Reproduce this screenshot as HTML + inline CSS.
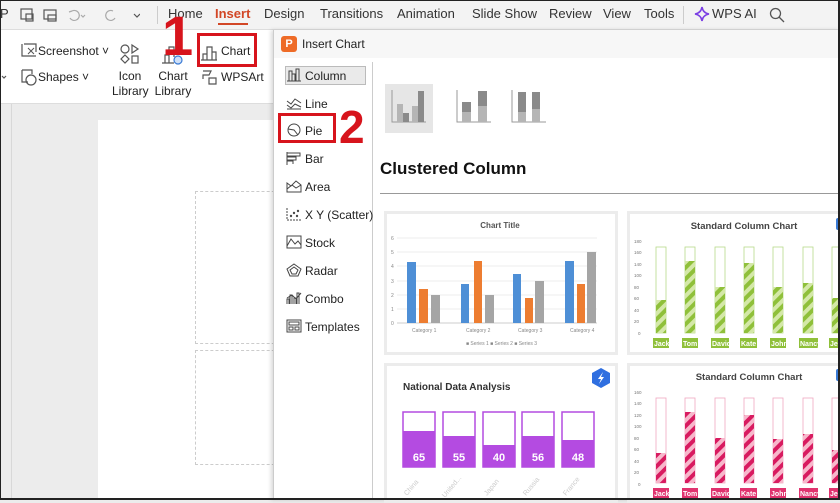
<!DOCTYPE html>
<html><head><meta charset="utf-8"><style>
*{margin:0;padding:0;box-sizing:border-box}
body{width:840px;height:500px;overflow:hidden;background:#ececec;font-family:"Liberation Sans",sans-serif;position:relative;color:#222}
.a{position:absolute;white-space:nowrap}
.tab{position:absolute;top:6px;font-size:13px;color:#333;white-space:nowrap}
.mi{position:absolute;left:286px;font-size:12px;color:#222;white-space:nowrap}
.mi svg{position:absolute;left:0;top:-1px}
.mi span{position:absolute;left:19px;top:0;white-space:nowrap}
.card{position:absolute;background:#fff;border:3px solid #ececec}
</style></head><body>
<div class="a" style="left:0;top:0;width:840px;height:30px;background:#f3f3f3;border-bottom:1px solid #ddd"></div>
<div class="tab" style="left:0">P</div>
<svg class="a" style="left:20px;top:6px" width="120" height="18" fill="none" stroke="#555" stroke-width="1.2">
<rect x="1" y="3" width="11" height="10"/><rect x="6" y="8" width="7" height="7"/>
<rect x="24" y="4" width="12" height="9"/><rect x="28" y="9" width="8" height="6"/>
<path d="M52 5a5 5 0 1 1-2 7M52 5l-3 1" stroke="#aaa"/><path d="M61 9l2 2 2-2" stroke="#aaa"/>
<path d="M93 5a5 5 0 1 0 2 7" stroke="#aaa"/>
<path d="M114 8l3 3 3-3"/></svg>
<div class="a" style="left:157px;top:6px;width:1px;height:18px;background:#ccc"></div>
<div class="tab" style="left:168px">Home</div>
<div class="tab" style="left:215px;color:#d24726;font-weight:bold">Insert</div>
<div class="a" style="left:218px;top:23px;width:30px;height:2px;background:#d24726"></div>
<div class="tab" style="left:264px">Design</div>
<div class="tab" style="left:320px">Transitions</div>
<div class="tab" style="left:397px">Animation</div>
<div class="tab" style="left:472px">Slide Show</div>
<div class="tab" style="left:549px">Review</div>
<div class="tab" style="left:603px">View</div>
<div class="tab" style="left:644px">Tools</div>
<div class="a" style="left:683px;top:6px;width:1px;height:18px;background:#ccc"></div>
<svg class="a" style="left:694px;top:6px" width="16" height="16"><path d="M8 1Q9 7 15 8Q9 9 8 15Q7 9 1 8Q7 7 8 1Z" fill="none" stroke="#7b3fe4" stroke-width="1.6"/></svg>
<div class="tab" style="left:712px">WPS AI</div>
<svg class="a" style="left:769px;top:7px" width="16" height="16" fill="none" stroke="#555" stroke-width="1.3"><circle cx="6.5" cy="6.5" r="5"/><path d="M10 10l5 5"/></svg>
<div class="a" style="left:0;top:30px;width:840px;height:74px;background:#fff;border-bottom:1px solid #ddd"></div>
<svg class="a" style="left:0;top:40px" width="280" height="60" fill="none" stroke="#555" stroke-width="1.2">
<path d="M2 36l2 2 2-2"/>
<path d="M22 4v12h14M24 4h12v8" /><path d="M28 8l6 6M34 8l-6 6" stroke-width="1"/>
<path d="M22 30v12h6M22 30h10v4"/><circle cx="31" cy="40" r="5"/>
<circle cx="125" cy="9" r="4"/><path d="M132 5l6 4-6 4z"/><path d="M125 15l4 4-4 4-4-4z"/><rect x="132" y="16" width="6" height="7"/>
<path d="M165 23v-8h4v8h-4M169 23V7h5v10M162 23h12"/><circle cx="178" cy="20" r="4" stroke="#3a7bd5" fill="#cfe0f7"/>
<path d="M203 20v-6h4v6M207 20V7h5v13M212 20v-8h4v8M201 20h16"/>
<path d="M203 31h8l-2 4h-6v4M209 38h7v6h-7z"/></svg>
<div class="a" style="left:38px;top:44px;font-size:12px">Screenshot ˅</div>
<div class="a" style="left:38px;top:70px;font-size:12px">Shapes ˅</div>
<div class="a" style="left:112px;top:69px;font-size:12px;text-align:center;width:36px;line-height:15px">Icon<br>Library</div>
<div class="a" style="left:152px;top:69px;font-size:12px;text-align:center;width:42px;line-height:15px">Chart<br>Library</div>
<div class="a" style="left:221px;top:44px;font-size:12px">Chart</div>
<div class="a" style="left:221px;top:70px;font-size:12px">WPSArt</div>
<div class="a" style="left:197px;top:33px;width:60px;height:34px;border:3px solid #d7141c"></div>
<div class="a" style="left:162px;top:8px;font-size:56px;font-weight:bold;color:#d7141c;line-height:56px">1</div>
<div class="a" style="left:11px;top:104px;width:1px;height:396px;background:#d8d8d8"></div>
<div class="a" style="left:98px;top:120px;width:180px;height:380px;background:#fff"></div>
<div class="a" style="left:195px;top:191px;width:90px;height:153px;border:1px dashed #ccc"></div>
<div class="a" style="left:195px;top:350px;width:90px;height:115px;border:1px dashed #ccc"></div>
<div class="a" style="left:273px;top:30px;width:567px;height:470px;background:#fff;border-left:1px solid #ccc;box-shadow:-2px 0 4px rgba(0,0,0,.15)"></div>
<div class="a" style="left:274px;top:30px;width:566px;height:28px;background:#f7f7f7"></div>
<div class="a" style="left:281px;top:36px;width:16px;height:16px;background:#ee6b27;border-radius:3px;color:#fff;font-size:11px;font-weight:bold;text-align:center;line-height:16px">P</div>
<div class="a" style="left:302px;top:37px;font-size:12px">Insert Chart</div>
<div class="a" style="left:372px;top:62px;width:1px;height:438px;background:#ccc"></div>
<div class="a" style="left:285px;top:66px;width:81px;height:19px;background:#eaeaea;border:1px solid #bbb"></div>
<div class="mi" style="top:69px"><svg width="16" height="14" fill="none" stroke="#444"><path d="M1 13h14M3 13V3h3v10M6 13V6h3v7M10 13V1h3v12"/></svg><span>Column</span></div>
<div class="mi" style="top:97px"><svg width="16" height="14" fill="none" stroke="#444"><path d="M1 5l4 3 4-5 6 4M1 9l4 3 4-4 6 3M1 13h14"/></svg><span>Line</span></div>
<div class="mi" style="top:124px"><svg width="16" height="14" fill="none" stroke="#444"><circle cx="8" cy="7" r="6"/><path d="M2 6l6 1 4 5"/></svg><span>Pie</span></div>
<div class="mi" style="top:152px"><svg width="16" height="14" fill="none" stroke="#444"><path d="M1 1v13M1 2h13v3H1M1 6h9v3H1M1 10h6v3"/></svg><span>Bar</span></div>
<div class="mi" style="top:180px"><svg width="16" height="14" fill="none" stroke="#444"><path d="M1 13V4l4 3 5-5 5 4v7zM1 10l5-4 4 3 5-3"/></svg><span>Area</span></div>
<div class="mi" style="top:208px"><svg width="16" height="14" fill="none" stroke="#444"><path d="M1 1v12h14" stroke-dasharray="2 1"/><circle cx="5" cy="9" r=".7"/><circle cx="8" cy="6" r=".7"/><circle cx="12" cy="4" r=".7"/><circle cx="11" cy="9" r=".7"/></svg><span>X Y (Scatter)</span></div>
<div class="mi" style="top:236px"><svg width="16" height="14" fill="none" stroke="#444"><rect x="1" y="1" width="14" height="12"/><path d="M1 11l4-7 4 5 3-3 3 4"/></svg><span>Stock</span></div>
<div class="mi" style="top:264px"><svg width="16" height="14" fill="none" stroke="#444"><path d="M8 1l7 5-3 7H4L1 6z"/><path d="M8 4l4 3-2 4H6L4 7z"/></svg><span>Radar</span></div>
<div class="mi" style="top:292px"><svg width="16" height="14" fill="none" stroke="#444"><path d="M1 13V8h2v5M4 13V4h2v9M8 13V7h2v6M11 13V2h2v11M1 7l5-3 4 4 5-6"/></svg><span>Combo</span></div>
<div class="mi" style="top:320px"><svg width="16" height="14" fill="none" stroke="#444"><rect x="1" y="1" width="14" height="12"/><rect x="3" y="3" width="10" height="3"/><rect x="3" y="8" width="4" height="3"/><rect x="9" y="8" width="4" height="3"/></svg><span>Templates</span></div>
<div class="a" style="left:278px;top:113px;width:58px;height:30px;border:3px solid #d7141c"></div>
<div class="a" style="left:339px;top:104px;font-size:46px;font-weight:bold;color:#d7141c;line-height:46px">2</div>
<svg class="a" style="left:385px;top:84px" width="170" height="50">
<rect x="0" y="0" width="48" height="49" fill="#e6e6e6"/>
<path d="M7 6v32h34M72 6v32h34M127 6v32h34" stroke="#999" fill="none"/>
<rect x="12" y="20" width="6" height="18" fill="#b5b5b5"/><rect x="18" y="29" width="6" height="9" fill="#8a8a8a"/><rect x="27" y="22" width="6" height="16" fill="#b5b5b5"/><rect x="33" y="7" width="6" height="31" fill="#8a8a8a"/>
<rect x="77" y="28" width="9" height="10" fill="#b5b5b5"/><rect x="77" y="18" width="9" height="10" fill="#8a8a8a"/><rect x="93" y="22" width="9" height="16" fill="#b5b5b5"/><rect x="93" y="7" width="9" height="15" fill="#8a8a8a"/>
<rect x="133" y="28" width="8" height="10" fill="#b5b5b5"/><rect x="133" y="8" width="8" height="20" fill="#8a8a8a"/><rect x="147" y="25" width="8" height="13" fill="#b5b5b5"/><rect x="147" y="8" width="8" height="17" fill="#8a8a8a"/></svg>
<div class="a" style="left:380px;top:159px;font-size:17px;font-weight:bold;color:#111">Clustered Column</div>
<div class="a" style="left:380px;top:193px;width:460px;height:1px;background:#999"></div>
<div class="card" style="left:384px;top:211px;width:234px;height:144px"></div>
<div class="card" style="left:627px;top:211px;width:216px;height:144px"></div>
<div class="card" style="left:384px;top:363px;width:234px;height:140px"></div>
<div class="card" style="left:627px;top:363px;width:216px;height:140px"></div>
<svg class="a" style="left:0;top:0" width="840" height="500" font-family="Liberation Sans, sans-serif">
<defs>
<pattern id="g" width="8" height="8" patternUnits="userSpaceOnUse" patternTransform="rotate(45)"><rect width="8" height="8" fill="#d4e8a8"/><rect width="4" height="8" fill="#8fc03a"/></pattern>
<pattern id="p" width="8" height="8" patternUnits="userSpaceOnUse" patternTransform="rotate(45)"><rect width="8" height="8" fill="#f7b7cb"/><rect width="4" height="8" fill="#d81b60"/></pattern>
</defs>
<text x="500" y="228" font-size="8" font-weight="bold" fill="#555" text-anchor="middle">Chart Title</text>
<g stroke="#eee"><path d="M397 238h200M397 252h200M397 266h200M397 281h200M397 295h200M397 309h200"/></g>
<path d="M397 323h200" stroke="#ccc"/>
<g font-size="5" fill="#888"><text x="391" y="240">6</text><text x="391" y="254">5</text><text x="391" y="268">4</text><text x="391" y="283">3</text><text x="391" y="297">2</text><text x="391" y="311">1</text><text x="391" y="325">0</text>
<text x="412" y="332">Category 1</text><text x="466" y="332">Category 2</text><text x="518" y="332">Category 3</text><text x="570" y="332">Category 4</text>
<text x="466" y="345">■ Series 1 ■ Series 2 ■ Series 3</text></g>
<g fill="#4e8fd6"><rect x="407" y="262" width="9" height="61"/><rect x="461" y="284" width="8" height="39"/><rect x="513" y="274" width="8" height="49"/><rect x="565" y="261" width="9" height="62"/></g>
<g fill="#ed7d31"><rect x="419" y="289" width="9" height="34"/><rect x="474" y="261" width="8" height="62"/><rect x="525" y="298" width="8" height="25"/><rect x="577" y="284" width="8" height="39"/></g>
<g fill="#a5a5a5"><rect x="431" y="295" width="9" height="28"/><rect x="485" y="295" width="9" height="28"/><rect x="535" y="281" width="9" height="42"/><rect x="587" y="252" width="9" height="71"/></g>
<text x="744" y="229" font-size="9.5" font-weight="bold" fill="#444" text-anchor="middle">Standard Column Chart</text>
<rect x="836" y="218" width="6" height="12" fill="#3a7bd5" rx="2"/>
<g font-size="4.5" fill="#777"><text x="634" y="243">180</text><text x="634" y="254">160</text><text x="634" y="266">140</text><text x="634" y="277">100</text><text x="634" y="289">80</text><text x="634" y="300">60</text><text x="634" y="312">40</text><text x="634" y="323">20</text><text x="638" y="335">0</text></g>
<g fill="#fff" stroke="#b8d98a" stroke-width=".8">
<rect x="656" y="247" width="10" height="86"/><rect x="685" y="247" width="10" height="86"/><rect x="715" y="247" width="10" height="86"/><rect x="744" y="247" width="10" height="86"/><rect x="773" y="247" width="10" height="86"/><rect x="803" y="247" width="10" height="86"/><rect x="832" y="247" width="10" height="86"/></g>
<g fill="url(#g)"><rect x="656" y="300" width="10" height="33"/><rect x="685" y="261" width="10" height="72"/><rect x="715" y="287" width="10" height="46"/><rect x="744" y="263" width="10" height="70"/><rect x="773" y="287" width="10" height="46"/><rect x="803" y="283" width="10" height="50"/><rect x="832" y="298" width="10" height="35"/></g>
<g fill="#8fc03a"><rect x="653" y="338" width="16" height="10"/><rect x="682" y="338" width="16" height="10"/><rect x="711" y="338" width="18" height="10"/><rect x="740" y="338" width="17" height="10"/><rect x="770" y="338" width="16" height="10"/><rect x="799" y="338" width="19" height="10"/><rect x="829" y="338" width="14" height="10"/></g>
<g font-size="7" font-weight="bold" fill="#fff"><text x="654" y="346">Jack</text><text x="683" y="346">Tom</text><text x="712" y="346">David</text><text x="741" y="346">Kate</text><text x="771" y="346">John</text><text x="800" y="346">Nancy</text><text x="830" y="346">Jess</text></g>
<text x="749" y="380" font-size="9.5" font-weight="bold" fill="#444" text-anchor="middle">Standard Column Chart</text>
<rect x="836" y="369" width="6" height="12" fill="#3a7bd5" rx="2"/>
<g font-size="4.5" fill="#777"><text x="634" y="394">160</text><text x="634" y="405">140</text><text x="634" y="417">120</text><text x="634" y="428">100</text><text x="634" y="440">80</text><text x="634" y="451">60</text><text x="634" y="463">40</text><text x="634" y="474">20</text><text x="638" y="486">0</text></g>
<g fill="#fff" stroke="#f0a8c0" stroke-width=".8">
<rect x="656" y="398" width="10" height="85"/><rect x="685" y="398" width="10" height="85"/><rect x="715" y="398" width="10" height="85"/><rect x="744" y="398" width="10" height="85"/><rect x="773" y="398" width="10" height="85"/><rect x="803" y="398" width="10" height="85"/><rect x="832" y="398" width="10" height="85"/></g>
<g fill="url(#p)"><rect x="656" y="453" width="10" height="30"/><rect x="685" y="412" width="10" height="71"/><rect x="715" y="438" width="10" height="45"/><rect x="744" y="415" width="10" height="68"/><rect x="773" y="439" width="10" height="44"/><rect x="803" y="434" width="10" height="49"/><rect x="832" y="450" width="10" height="33"/></g>
<g fill="#e0336f"><rect x="653" y="488" width="16" height="10"/><rect x="682" y="488" width="16" height="10"/><rect x="711" y="488" width="18" height="10"/><rect x="740" y="488" width="17" height="10"/><rect x="770" y="488" width="16" height="10"/><rect x="799" y="488" width="19" height="10"/><rect x="829" y="488" width="14" height="10"/></g>
<g font-size="7" font-weight="bold" fill="#fff"><text x="654" y="496">Jack</text><text x="683" y="496">Tom</text><text x="712" y="496">David</text><text x="741" y="496">Kate</text><text x="771" y="496">John</text><text x="800" y="496">Nancy</text><text x="830" y="496">Jess</text></g>
<text x="403" y="390" font-size="10" font-weight="bold" fill="#333">National Data Analysis</text>
<path d="M601 368l9 5v10l-9 5-9-5v-10z" fill="#2f6fe0"/><path d="M603 372l-5 7h3l-2 5 5-7h-3z" fill="#fff"/>
<g fill="#fff" stroke="#b44be1" stroke-width="1.5"><rect x="403" y="412" width="32" height="55"/><rect x="443" y="412" width="32" height="55"/><rect x="483" y="412" width="32" height="55"/><rect x="522" y="412" width="32" height="55"/><rect x="562" y="412" width="32" height="55"/></g>
<g fill="#b44be1"><rect x="403" y="431" width="32" height="36"/><rect x="443" y="436" width="32" height="31"/><rect x="483" y="445" width="32" height="22"/><rect x="522" y="436" width="32" height="31"/><rect x="562" y="440" width="32" height="27"/></g>
<g font-size="11" font-weight="bold" fill="#fff" text-anchor="middle"><text x="419" y="461">65</text><text x="459" y="461">55</text><text x="499" y="461">40</text><text x="538" y="461">56</text><text x="578" y="461">48</text></g>
<g font-size="7" fill="#ccc"><text transform="translate(407 496) rotate(-50)">China</text><text transform="translate(445 498) rotate(-50)">United...</text><text transform="translate(487 496) rotate(-50)">Japan</text><text transform="translate(526 496) rotate(-50)">Russia</text><text transform="translate(566 496) rotate(-50)">France</text></g>
</svg>
<div class="a" style="left:0;top:0;width:840px;height:500px;border:1px solid #222;border-right-width:2px;border-bottom-width:2px"></div>
</body></html>
